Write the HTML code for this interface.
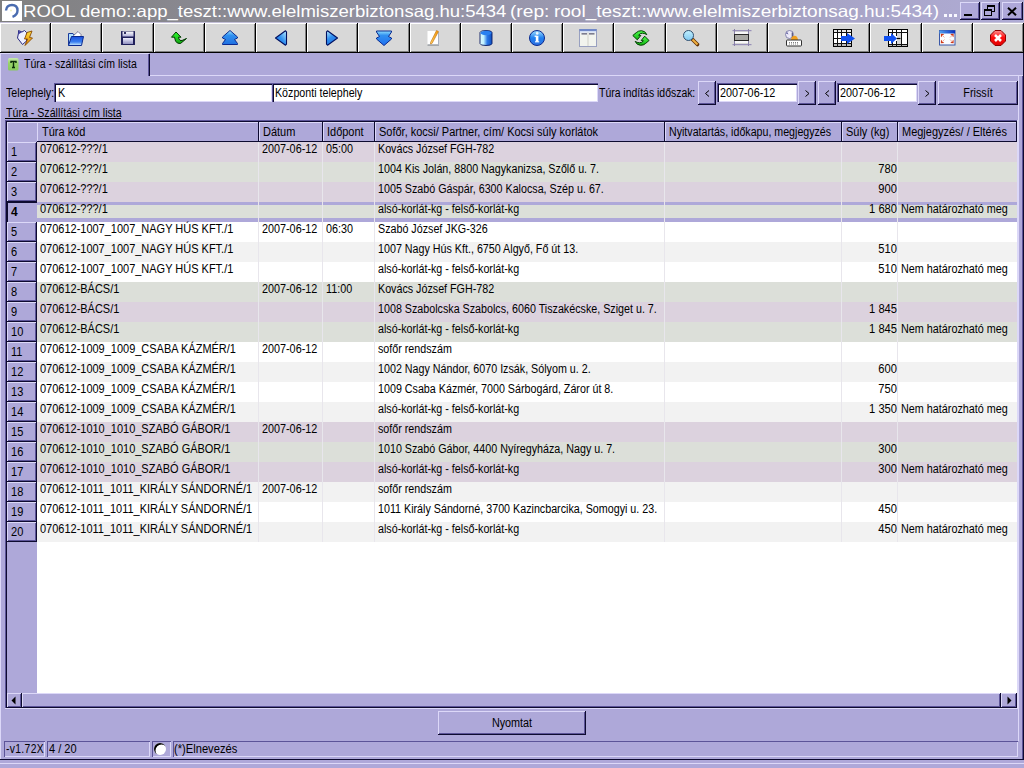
<!DOCTYPE html>
<html><head><meta charset="utf-8"><style>
html,body{margin:0;padding:0;width:1024px;height:768px;overflow:hidden;background:#aea8d9}
div,span,svg{position:absolute}
div{box-sizing:border-box}
.t{font-family:"Liberation Sans",sans-serif;font-size:12px;line-height:12px;white-space:pre;color:#000;transform-origin:0 0}
</style></head><body>
<div style="left:0px;top:0px;width:1024px;height:22px;background:linear-gradient(to right,#808080 0%,#b0acd6 100%)"></div><div style="left:2px;top:1px;width:20px;height:20px;background:#fff"><svg width="20" height="20" viewBox="0 0 20 20"><path d="M4 9.5 Q4.5 4 10 4 Q15.5 4 15.5 9.5 Q15.5 14 10.5 15.8" fill="none" stroke="#4a6cb0" stroke-width="2.4"/><circle cx="9" cy="9.5" r="1" fill="#f0f0c0"/></svg></div><span class="t" style="left:23px;top:3px;font-size:16.5px;line-height:16.5px;color:#fff;transform:scaleX(1.123)">ROOL demo::app_teszt::www.elelmiszerbiztonsag.hu:5434</span><span class="t" style="left:510px;top:3px;font-size:16.5px;line-height:16.5px;color:#fff;transform:scaleX(1.16)">(rep:</span><span class="t" style="left:554px;top:3px;font-size:16.5px;line-height:16.5px;color:#fff;transform:scaleX(1.15)">rool_teszt::www.elelmiszerbiztonsag.hu:5434)</span><div style="left:944px;top:14px;width:3px;height:3px;background:#f8f8ff"></div><div style="left:949px;top:14px;width:3px;height:3px;background:#f8f8ff"></div><div style="left:954px;top:14px;width:3px;height:3px;background:#f8f8ff"></div><div style="left:960px;top:2px;width:20px;height:18px;background:#aea8d9;box-shadow:inset -1px -1px 0 #0e0b30,inset 1px 1px 0 #dcd8f8,inset -2px -2px 0 #5c5498"><div style="left:4px;top:12px;width:8px;height:2px;background:#000"></div></div><div style="left:981px;top:2px;width:19px;height:18px;background:#aea8d9;box-shadow:inset -1px -1px 0 #0e0b30,inset 1px 1px 0 #dcd8f8,inset -2px -2px 0 #5c5498"><div style="left:6px;top:3px;width:8px;height:7px;border:1px solid #000;border-top-width:2px"></div><div style="left:3px;top:7px;width:8px;height:7px;border:1px solid #000;border-top-width:2px;background:#aea8d9"></div></div><div style="left:1002px;top:2px;width:21px;height:18px;background:#aea8d9;box-shadow:inset -1px -1px 0 #0e0b30,inset 1px 1px 0 #dcd8f8,inset -2px -2px 0 #5c5498"><svg style="left:5px;top:5px" width="10" height="9" viewBox="0 0 10 9"><path d="M1 0.8 L9 8.2 M9 0.8 L1 8.2" stroke="#000" stroke-width="2"/></svg></div><div style="left:0px;top:22px;width:1024px;height:1px;background:#c4c0d8"></div><div style="left:0px;top:23px;width:51px;height:30px;background:#d8d8d8;box-shadow:inset -1px -1px 0 #000000,inset 1px 1px 0 #ffffff,inset -2px -2px 0 #808080"><div style="left:17px;top:7px;width:16px;height:16px"><svg style="left:-4px;top:-3px;overflow:visible" width="26" height="22" viewBox="-4 -3 26 22"><defs><linearGradient id="g0" x1="0" y1="0" x2="0" y2="1"><stop offset="0" stop-color="#ffe040"/><stop offset="1" stop-color="#e08000"/></linearGradient></defs><path d="M1.5 0.5 L1.5 3 L0.5 8 L5.5 14.5 L9.5 11 L9.5 2.5 L7.5 0.5 L5 2 Z" fill="#eef0ff" stroke="#2a2a80" stroke-width="1"/><path d="M1.5 1 L1.5 4.5 L5 2 Z" fill="#4040a0"/><path d="M15 1 L10 2.5 L7.5 9 L10.5 9 L8 15.5 L15.5 8 L12.5 7.5 Z" fill="url(#g0)" stroke="#8a4a00" stroke-width="0.9" stroke-linejoin="round"/></svg></div></div><div style="left:51px;top:23px;width:51px;height:30px;background:#d8d8d8;box-shadow:inset -1px -1px 0 #000000,inset 1px 1px 0 #ffffff,inset -2px -2px 0 #808080"><div style="left:17px;top:7px;width:16px;height:16px"><svg style="left:-4px;top:-3px;overflow:visible" width="26" height="22" viewBox="-4 -3 26 22"><defs><linearGradient id="g1" x1="0" y1="0" x2="0" y2="1"><stop offset="0" stop-color="#1a50e0"/><stop offset="0.6" stop-color="#3a80f0"/><stop offset="1" stop-color="#d0f0ff"/></linearGradient></defs><path d="M0.5 15.5 V3.5 H5 L6 5 H11 V8" fill="#b0e0ff" stroke="#1a3a9a" stroke-width="1"/><path d="M4 7 L10 1.5 L13 4.5 L13 7 Z" fill="#ffffff" stroke="#505080" stroke-width="0.7"/><path d="M3.5 6.5 H15.5 L13.5 15.5 H0.5 Z" fill="url(#g1)" stroke="#0a2a90" stroke-width="1"/></svg></div></div><div style="left:102px;top:23px;width:52px;height:30px;background:#d8d8d8;box-shadow:inset -1px -1px 0 #000000,inset 1px 1px 0 #ffffff,inset -2px -2px 0 #808080"><div style="left:18px;top:7px;width:16px;height:16px"><svg style="left:-4px;top:-3px;overflow:visible" width="26" height="22" viewBox="-4 -3 26 22"><defs><linearGradient id="g2a" x1="0" y1="0" x2="0" y2="1"><stop offset="0" stop-color="#ffffff"/><stop offset="1" stop-color="#b0b0d8"/></linearGradient><linearGradient id="g2b" x1="0" y1="0" x2="0" y2="1"><stop offset="0" stop-color="#f0f0ff"/><stop offset="1" stop-color="#9090c0"/></linearGradient></defs><rect x="1" y="1" width="14" height="14" rx="0.5" fill="#20205a"/><rect x="2.5" y="1.5" width="11" height="5" fill="url(#g2a)"/><rect x="4" y="2" width="2" height="2" fill="#303060"/><rect x="3" y="8" width="10" height="6" fill="url(#g2b)"/></svg></div></div><div style="left:154px;top:23px;width:51px;height:30px;background:#d8d8d8;box-shadow:inset -1px -1px 0 #000000,inset 1px 1px 0 #ffffff,inset -2px -2px 0 #808080"><div style="left:17px;top:7px;width:16px;height:16px"><svg style="left:-4px;top:-3px;overflow:visible" width="26" height="22" viewBox="-4 -3 26 22"><defs><linearGradient id="g3" x1="0" y1="0" x2="0" y2="1"><stop offset="0" stop-color="#30ff30"/><stop offset="1" stop-color="#10a010"/></linearGradient></defs><path d="M5 2 L0.5 7.2 L3.5 7.2 L4.5 11 Q6 14 9.5 13.5 L15.5 8.5 L11 10.5 Q8.5 11 8 9 L7.5 7.2 L10 7.2 Z" fill="url(#g3)" stroke="#003a00" stroke-width="1" stroke-linejoin="round"/></svg></div></div><div style="left:205px;top:23px;width:51px;height:30px;background:#d8d8d8;box-shadow:inset -1px -1px 0 #000000,inset 1px 1px 0 #ffffff,inset -2px -2px 0 #808080"><div style="left:17px;top:7px;width:16px;height:16px"><svg style="left:-4px;top:-3px;overflow:visible" width="26" height="22" viewBox="-4 -3 26 22"><defs><linearGradient id="g4" x1="0" y1="0" x2="0" y2="1"><stop offset="0" stop-color="#a0e8ff"/><stop offset="0.35" stop-color="#3090f0"/><stop offset="1" stop-color="#2070e0"/></linearGradient></defs><path d="M8 0.5 L15.5 7 L15.5 8 L12.5 9.5 L15.5 13.5 L15.5 14.5 L0.5 14.5 L0.5 13.5 L3.5 9.5 L0.5 8 L0.5 7 Z" fill="url(#g4)" stroke="#0a2a90" stroke-width="1" stroke-linejoin="round"/></svg></div></div><div style="left:256px;top:23px;width:51px;height:30px;background:#d8d8d8;box-shadow:inset -1px -1px 0 #000000,inset 1px 1px 0 #ffffff,inset -2px -2px 0 #808080"><div style="left:17px;top:7px;width:16px;height:16px"><svg style="left:-4px;top:-3px;overflow:visible" width="26" height="22" viewBox="-4 -3 26 22"><defs><linearGradient id="g5" x1="1" y1="0" x2="0" y2="1"><stop offset="0" stop-color="#c0f0ff"/><stop offset="0.5" stop-color="#3090f0"/><stop offset="1" stop-color="#2070e0"/></linearGradient></defs><path d="M2.5 8 L12.5 0.8 L13.5 1.8 L13.5 14.2 L12.5 15.2 Z" fill="url(#g5)" stroke="#001060" stroke-width="1.1" stroke-linejoin="round"/></svg></div></div><div style="left:307px;top:23px;width:51px;height:30px;background:#d8d8d8;box-shadow:inset -1px -1px 0 #000000,inset 1px 1px 0 #ffffff,inset -2px -2px 0 #808080"><div style="left:17px;top:7px;width:16px;height:16px"><svg style="left:-4px;top:-3px;overflow:visible" width="26" height="22" viewBox="-4 -3 26 22"><defs><linearGradient id="g6" x1="0" y1="0" x2="0.6" y2="1"><stop offset="0" stop-color="#c0f0ff"/><stop offset="0.5" stop-color="#3090f0"/><stop offset="1" stop-color="#2070e0"/></linearGradient></defs><path d="M13.5 8 L3.5 0.8 L2.5 1.8 L2.5 14.2 L3.5 15.2 Z" fill="url(#g6)" stroke="#001060" stroke-width="1.1" stroke-linejoin="round"/></svg></div></div><div style="left:358px;top:23px;width:52px;height:30px;background:#d8d8d8;box-shadow:inset -1px -1px 0 #000000,inset 1px 1px 0 #ffffff,inset -2px -2px 0 #808080"><div style="left:18px;top:7px;width:16px;height:16px"><svg style="left:-4px;top:-3px;overflow:visible" width="26" height="22" viewBox="-4 -3 26 22"><defs><linearGradient id="g7" x1="0" y1="0" x2="0" y2="1"><stop offset="0" stop-color="#90e0ff"/><stop offset="0.3" stop-color="#3090f0"/><stop offset="1" stop-color="#2070f0"/></linearGradient></defs><path d="M0.5 1 L15.5 1 L15.5 2 L12.5 6.5 L15.5 8 L15.5 9 L8 15.5 L0.5 9 L0.5 8 L3.5 6.5 L0.5 2 Z" fill="url(#g7)" stroke="#0a2a90" stroke-width="1" stroke-linejoin="round"/></svg></div></div><div style="left:410px;top:23px;width:51px;height:30px;background:#d8d8d8;box-shadow:inset -1px -1px 0 #000000,inset 1px 1px 0 #ffffff,inset -2px -2px 0 #808080"><div style="left:17px;top:7px;width:16px;height:16px"><svg style="left:-4px;top:-3px;overflow:visible" width="26" height="22" viewBox="-4 -3 26 22"><defs><linearGradient id="g8" x1="0" y1="0" x2="1" y2="0"><stop offset="0" stop-color="#ffd060"/><stop offset="1" stop-color="#f09000"/></linearGradient></defs><rect x="0.5" y="1" width="11" height="14" fill="#ffffff"/><rect x="0.5" y="14.5" width="11.5" height="1" fill="#707880"/><rect x="11" y="2" width="1" height="13" fill="#a8b0c0"/><path d="M9.5 0.5 L11.5 1.5 L5 13.5 L3.5 14 L3.5 12.5 Z" fill="url(#g8)" stroke="#c07010" stroke-width="0.6"/></svg></div></div><div style="left:461px;top:23px;width:51px;height:30px;background:#d8d8d8;box-shadow:inset -1px -1px 0 #000000,inset 1px 1px 0 #ffffff,inset -2px -2px 0 #808080"><div style="left:17px;top:7px;width:16px;height:16px"><svg style="left:-4px;top:-3px;overflow:visible" width="26" height="22" viewBox="-4 -3 26 22"><defs><linearGradient id="g9" x1="0" y1="0" x2="1" y2="0"><stop offset="0" stop-color="#e0fcff"/><stop offset="0.3" stop-color="#c0f0ff"/><stop offset="0.6" stop-color="#2a78e8"/><stop offset="1" stop-color="#1050c0"/></linearGradient></defs><path d="M2 2.5 Q2 0.5 8 0.5 Q14 0.5 14 2.5 V13.5 Q14 15.5 8 15.5 Q2 15.5 2 13.5 Z" fill="url(#g9)" stroke="#0a1a60" stroke-width="0.9"/><ellipse cx="8" cy="3" rx="5.5" ry="2.2" fill="#2a80f0"/></svg></div></div><div style="left:512px;top:23px;width:51px;height:30px;background:#d8d8d8;box-shadow:inset -1px -1px 0 #000000,inset 1px 1px 0 #ffffff,inset -2px -2px 0 #808080"><div style="left:17px;top:7px;width:16px;height:16px"><svg style="left:-4px;top:-3px;overflow:visible" width="26" height="22" viewBox="-4 -3 26 22"><defs><linearGradient id="g10" x1="0" y1="0" x2="0" y2="1"><stop offset="0" stop-color="#a0e0ff"/><stop offset="0.5" stop-color="#2080f0"/><stop offset="1" stop-color="#3070e0"/></linearGradient></defs><circle cx="8" cy="8" r="7.5" fill="url(#g10)" stroke="#0a2a90" stroke-width="1"/><rect x="6.8" y="5.8" width="2.6" height="6.2" fill="#ffffff"/><rect x="5.6" y="5.6" width="2" height="1.3" fill="#ffffff"/><rect x="6" y="11.2" width="4.2" height="1.2" fill="#e8f4ff"/><circle cx="8.2" cy="3.4" r="1.3" fill="#f0f8ff"/></svg></div></div><div style="left:563px;top:23px;width:51px;height:30px;background:#d8d8d8;box-shadow:inset -1px -1px 0 #000000,inset 1px 1px 0 #ffffff,inset -2px -2px 0 #808080"><div style="left:17px;top:7px;width:16px;height:16px"><svg style="left:-4px;top:-3px;overflow:visible" width="26" height="22" viewBox="-4 -3 26 22"><defs></defs><rect x="-0.5" y="-0.5" width="17" height="17" fill="#f2f4ee" stroke="#98a0c0" stroke-width="1"/><rect x="-0.5" y="-1" width="17" height="2.2" fill="#7088c8"/><rect x="0" y="1.2" width="16" height="1.3" fill="#d0dcf8"/><rect x="1.5" y="3.2" width="5.5" height="1.3" fill="#606078"/><rect x="9" y="3.2" width="5.5" height="1.3" fill="#606078"/><rect x="7.5" y="2.5" width="1" height="13.5" fill="#d0d0c8"/></svg></div></div><div style="left:614px;top:23px;width:52px;height:30px;background:#d8d8d8;box-shadow:inset -1px -1px 0 #000000,inset 1px 1px 0 #ffffff,inset -2px -2px 0 #808080"><div style="left:18px;top:7px;width:16px;height:16px"><svg style="left:-4px;top:-3px;overflow:visible" width="26" height="22" viewBox="-4 -3 26 22"><defs><linearGradient id="g12" x1="0" y1="0" x2="0" y2="1"><stop offset="0" stop-color="#50ff50"/><stop offset="1" stop-color="#10b010"/></linearGradient></defs><path d="M0.8 5.5 L5.3 9.8 L8.8 5.5 L6.6 5.2 Q8 3.2 10.5 3.2 Q13 3.4 14.8 4.6 Q13.2 0.9 9.5 0.7 Q6.2 0.7 4.3 2.6 Z" fill="url(#g12)" stroke="#004000" stroke-width="1" stroke-linejoin="round"/><path d="M17 10.5 L12.7 6.2 L9.2 10.5 L11.4 10.8 Q10 12.8 7.5 12.8 Q5 12.6 3.2 11.4 Q4.8 15.1 8.5 15.3 Q11.8 15.3 13.7 13.4 Z" fill="url(#g12)" stroke="#004000" stroke-width="1" stroke-linejoin="round"/></svg></div></div><div style="left:666px;top:23px;width:51px;height:30px;background:#d8d8d8;box-shadow:inset -1px -1px 0 #000000,inset 1px 1px 0 #ffffff,inset -2px -2px 0 #808080"><div style="left:17px;top:7px;width:16px;height:16px"><svg style="left:-4px;top:-3px;overflow:visible" width="26" height="22" viewBox="-4 -3 26 22"><defs><linearGradient id="g13" x1="0" y1="0" x2="0" y2="1"><stop offset="0" stop-color="#c0f0ff"/><stop offset="1" stop-color="#80c8f0"/></linearGradient></defs><path d="M9.5 9.5 L14.5 14.5" stroke="#603000" stroke-width="3.6" stroke-linecap="round"/><path d="M9.5 9.5 L14.5 14.5" stroke="#f0b040" stroke-width="2"/><circle cx="5.5" cy="5.5" r="5" fill="url(#g13)" stroke="#305070" stroke-width="1"/></svg></div></div><div style="left:717px;top:23px;width:51px;height:30px;background:#d8d8d8;box-shadow:inset -1px -1px 0 #000000,inset 1px 1px 0 #ffffff,inset -2px -2px 0 #808080"><div style="left:17px;top:7px;width:16px;height:16px"><svg style="left:-4px;top:-3px;overflow:visible" width="26" height="22" viewBox="-4 -3 26 22"><defs></defs><rect x="-1.5" y="0" width="19" height="1.2" fill="#9890b8"/><rect x="-1.5" y="14" width="19" height="1.2" fill="#9890b8"/><rect x="0" y="-1" width="1" height="17" fill="#8880a8"/><rect x="14" y="-1" width="1" height="17" fill="#8880a8"/><rect x="1" y="2" width="13" height="2" fill="#f8f8f8"/><rect x="1" y="11" width="13" height="2" fill="#f8f8f8"/><rect x="0.5" y="4.5" width="14" height="6" fill="#a8a8a4" stroke="#282828" stroke-width="1"/></svg></div></div><div style="left:768px;top:23px;width:51px;height:30px;background:#d8d8d8;box-shadow:inset -1px -1px 0 #000000,inset 1px 1px 0 #ffffff,inset -2px -2px 0 #808080"><div style="left:17px;top:7px;width:16px;height:16px"><svg style="left:-4px;top:-3px;overflow:visible" width="26" height="22" viewBox="-4 -3 26 22"><defs></defs><circle cx="4.5" cy="4.5" r="4" fill="#eceaf8" stroke="#7070a0" stroke-width="0.8"/><path d="M1 3.5 L3.5 4.5 L2 1.8" fill="#6060a0"/><rect x="6.7" y="2.5" width="1.2" height="5.5" fill="#505078"/><path d="M6 10 Q6.5 5.8 9.5 5.8 Q12.5 5.8 13 10 Z" fill="#f0a020"/><rect x="1.5" y="10" width="15" height="6" rx="0.8" fill="#ffffff" stroke="#303030" stroke-width="1"/><path d="M4 12.5 H13.5 M4 14 H13.5" stroke="#707070" stroke-width="0.9" stroke-dasharray="1 1"/></svg></div></div><div style="left:819px;top:23px;width:51px;height:30px;background:#d8d8d8;box-shadow:inset -1px -1px 0 #000000,inset 1px 1px 0 #ffffff,inset -2px -2px 0 #808080"><div style="left:17px;top:7px;width:16px;height:16px"><svg style="left:-4px;top:-3px;overflow:visible" width="26" height="22" viewBox="-4 -3 26 22"><defs></defs><rect x="-2.5" y="-0.5" width="18" height="17" fill="#ffffff" stroke="#000" stroke-width="1"/><rect x="-2" y="0" width="17" height="2" fill="#e8e8e8"/><rect x="-2" y="14" width="17" height="2" fill="#b8b8b8"/><path d="M-2.5 2.5 H15.5 M-2.5 8.5 H15.5 M-2.5 13.5 H15.5 M1.5 -0.5 V16.5 M5.5 -0.5 V16.5 M10.5 -0.5 V16.5" stroke="#101010" stroke-width="1" shape-rendering="crispEdges"/><path d="M5 6 H11 V3 L19 8.5 L11 14 V11 H5 Z" fill="#1050f0"/></svg></div></div><div style="left:870px;top:23px;width:52px;height:30px;background:#d8d8d8;box-shadow:inset -1px -1px 0 #000000,inset 1px 1px 0 #ffffff,inset -2px -2px 0 #808080"><div style="left:18px;top:7px;width:16px;height:16px"><svg style="left:-4px;top:-3px;overflow:visible" width="26" height="22" viewBox="-4 -3 26 22"><defs></defs><rect x="0.5" y="-0.5" width="19" height="17" fill="#ffffff" stroke="#000" stroke-width="1"/><rect x="9" y="3" width="5" height="11" fill="#d8d8d8"/><rect x="1" y="14" width="18" height="2" fill="#b8b8b8"/><path d="M0.5 2.5 H19.5 M0.5 14.5 H19.5 M4.5 -0.5 V16.5 M8.5 -0.5 V6 M8.5 11 V16.5 M13.5 -0.5 V16.5" stroke="#101010" stroke-width="1" shape-rendering="crispEdges"/><path d="M8.5 8.5 H12.5" stroke="#000" stroke-width="1.2"/><path d="M-4 6 H3 V3 L9 8.5 L3 14 V11 H-4 Z" fill="#1050f0"/></svg></div></div><div style="left:922px;top:23px;width:51px;height:30px;background:#d8d8d8;box-shadow:inset -1px -1px 0 #000000,inset 1px 1px 0 #ffffff,inset -2px -2px 0 #808080"><div style="left:17px;top:7px;width:16px;height:16px"><svg style="left:-4px;top:-3px;overflow:visible" width="26" height="22" viewBox="-4 -3 26 22"><defs><linearGradient id="g18" x1="0" y1="0" x2="1" y2="0"><stop offset="0" stop-color="#50a0f0"/><stop offset="1" stop-color="#0a30c0"/></linearGradient></defs><rect x="0.5" y="0.5" width="15.5" height="14.5" fill="#fafcff" stroke="#3a58a8" stroke-width="1"/><rect x="0.5" y="0.5" width="15.5" height="3" fill="url(#g18)"/><path d="M1.8 3.8 L5.2 4 L2 7.2 Z M14.7 3.8 L11.3 4 L14.5 7.2 Z M1.8 13.2 L5.2 13 L2 9.8 Z M14.7 13.2 L11.3 13 L14.5 9.8 Z" fill="#d03818"/><path d="M3 5 L5.5 7.5 M13.5 5 L11 7.5 M3 12 L5.5 9.5 M13.5 12 L11 9.5" stroke="#f0b0a0" stroke-width="1"/></svg></div></div><div style="left:973px;top:23px;width:51px;height:30px;background:#d8d8d8;box-shadow:inset -1px -1px 0 #000000,inset 1px 1px 0 #ffffff,inset -2px -2px 0 #808080"><div style="left:17px;top:7px;width:16px;height:16px"><svg style="left:-4px;top:-3px;overflow:visible" width="26" height="22" viewBox="-4 -3 26 22"><defs><linearGradient id="g19" x1="0" y1="0" x2="0" y2="1"><stop offset="0" stop-color="#ff9090"/><stop offset="0.45" stop-color="#ff1010"/><stop offset="1" stop-color="#e00000"/></linearGradient></defs><path d="M5 0.5 H11 L15.5 5 V11 L11 15.5 H5 L0.5 11 V5 Z" fill="url(#g19)" stroke="#900000" stroke-width="1"/><path d="M5 5 L11 11 M11 5 L5 11" stroke="#ffffff" stroke-width="2.6"/></svg></div></div><div style="left:0px;top:53px;width:1px;height:706px;background:#dcd8f8"></div><div style="left:1px;top:53px;width:148px;height:1px;background:#dcd8f8"></div><div style="left:149px;top:54px;width:1px;height:22px;background:#0e0b30"></div><div style="left:148px;top:54px;width:1px;height:22px;background:#5c5498"></div><div style="left:1022px;top:76px;width:1px;height:683px;background:#5c5498"></div><div style="left:1018px;top:76px;width:1px;height:665px;background:#dcd8f8"></div><div style="left:150px;top:75px;width:873px;height:1px;background:#dcd8f8"></div><div style="left:1023px;top:53px;width:1px;height:707px;background:#0e0b30"></div><div style="left:8px;top:59px;width:11px;height:12px;"><svg style="left:0;top:-1px" width="11" height="13" viewBox="0 0 11 13"><defs><linearGradient id="gt" x1="0" y1="0" x2="0" y2="1"><stop offset="0" stop-color="#c8e8b0"/><stop offset="0.4" stop-color="#98d468"/><stop offset="1" stop-color="#88c860"/></linearGradient></defs><rect x="0" y="0" width="10.5" height="12.5" rx="1.5" fill="url(#gt)"/><path d="M3 5 V3.5 H8 V5 M5.5 3.5 V9.3 M4 9.5 H7" fill="none" stroke="#0a2a0a" stroke-width="1.4"/></svg></div><span class="t" style="left:24px;top:58px;transform:scaleX(0.876);">Túra - szállítási cím lista</span><span class="t" style="left:6px;top:87px;transform:scaleX(0.89);">Telephely</span><span class="t" style="left:51px;top:87px;transform:scaleX(1);">:</span><div style="left:54px;top:83px;width:218px;height:19px;background:#fff;box-shadow:inset 1px 1px 0 #5c5498,inset 2px 2px 0 #0e0b30,inset -1px -1px 0 #dcd8f8"></div><span class="t" style="left:58px;top:87px;transform:scaleX(0.9);">K</span><div style="left:272px;top:83px;width:326px;height:19px;background:#fff;box-shadow:inset 1px 1px 0 #5c5498,inset 2px 2px 0 #0e0b30,inset -1px -1px 0 #dcd8f8"></div><span class="t" style="left:275px;top:87px;transform:scaleX(0.89);">Központi telephely</span><span class="t" style="left:599px;top:87px;transform:scaleX(0.87);">Túra indítás időszak</span><span class="t" style="left:692px;top:87px;transform:scaleX(1);">:</span><div style="left:698px;top:81px;width:18px;height:24px;background:#aea8d9;box-shadow:inset -1px -1px 0 #0e0b30,inset 1px 1px 0 #dcd8f8,inset -2px -2px 0 #5c5498"><svg style="left:7px;top:9px" width="5" height="7"><path d="M4 0.5 L0.5 3.5 L4 6.5" fill="none" stroke="#000" stroke-width="1"/></svg></div><div style="left:717px;top:83px;width:80px;height:19px;background:#fff;box-shadow:inset 1px 1px 0 #5c5498,inset 2px 2px 0 #0e0b30,inset -1px -1px 0 #dcd8f8"></div><span class="t" style="left:720px;top:87px;transform:scaleX(0.9);">2007-06-12</span><div style="left:798px;top:81px;width:18px;height:24px;background:#aea8d9;box-shadow:inset -1px -1px 0 #0e0b30,inset 1px 1px 0 #dcd8f8,inset -2px -2px 0 #5c5498"><svg style="left:7px;top:9px" width="5" height="7"><path d="M0.5 0.5 L4 3.5 L0.5 6.5" fill="none" stroke="#000" stroke-width="1"/></svg></div><div style="left:818px;top:81px;width:18px;height:24px;background:#aea8d9;box-shadow:inset -1px -1px 0 #0e0b30,inset 1px 1px 0 #dcd8f8,inset -2px -2px 0 #5c5498"><svg style="left:7px;top:9px" width="5" height="7"><path d="M4 0.5 L0.5 3.5 L4 6.5" fill="none" stroke="#000" stroke-width="1"/></svg></div><div style="left:837px;top:83px;width:80px;height:19px;background:#fff;box-shadow:inset 1px 1px 0 #5c5498,inset 2px 2px 0 #0e0b30,inset -1px -1px 0 #dcd8f8"></div><span class="t" style="left:840px;top:87px;transform:scaleX(0.9);">2007-06-12</span><div style="left:918px;top:81px;width:18px;height:24px;background:#aea8d9;box-shadow:inset -1px -1px 0 #0e0b30,inset 1px 1px 0 #dcd8f8,inset -2px -2px 0 #5c5498"><svg style="left:7px;top:9px" width="5" height="7"><path d="M0.5 0.5 L4 3.5 L0.5 6.5" fill="none" stroke="#000" stroke-width="1"/></svg></div><div style="left:938px;top:81px;width:80px;height:24px;background:#aea8d9;box-shadow:inset -1px -1px 0 #0e0b30,inset 1px 1px 0 #dcd8f8,inset -2px -2px 0 #5c5498"></div><span class="t" style="left:828px;width:300px;text-align:center;top:87px;transform:scaleX(0.9);transform-origin:50% 0;">Frissít</span><span class="t" style="left:6px;top:107px;transform:scaleX(0.885);">Túra - Szállítási cím lista</span><div style="left:5px;top:118px;width:116px;height:1px;background:#000"></div><div style="left:5px;top:120px;width:1013px;height:1px;background:#5c5498"></div><div style="left:5px;top:120px;width:1px;height:589px;background:#5c5498"></div><div style="left:6px;top:121px;width:1011px;height:1px;background:#0e0b30"></div><div style="left:6px;top:121px;width:1px;height:587px;background:#0e0b30"></div><div style="left:5px;top:708px;width:1013px;height:1px;background:#dcd8f8"></div><div style="left:1017px;top:120px;width:1px;height:589px;background:#dcd8f8"></div><div style="left:7px;top:122px;width:30px;height:571px;background:#aea8d9"></div><div style="left:37px;top:142px;width:980px;height:551px;background:#fff"></div><div style="left:7px;top:122px;width:30px;height:1px;background:#dcd8f8"></div><div style="left:7px;top:122px;width:1px;height:20px;background:#dcd8f8"></div><div style="left:37px;top:122px;width:222px;height:20px;background:#aea8d9;box-shadow:inset -1px -1px 0 #0e0b30,inset 1px 1px 0 #dcd8f8"></div><span class="t" style="left:42px;top:126px;transform:scaleX(0.915);">Túra kód</span><div style="left:259px;top:122px;width:64px;height:20px;background:#aea8d9;box-shadow:inset -1px -1px 0 #0e0b30,inset 1px 1px 0 #dcd8f8"></div><span class="t" style="left:263px;top:126px;transform:scaleX(0.915);">Dátum</span><div style="left:323px;top:122px;width:52px;height:20px;background:#aea8d9;box-shadow:inset -1px -1px 0 #0e0b30,inset 1px 1px 0 #dcd8f8"></div><span class="t" style="left:327px;top:126px;transform:scaleX(0.915);">Időpont</span><div style="left:375px;top:122px;width:290px;height:20px;background:#aea8d9;box-shadow:inset -1px -1px 0 #0e0b30,inset 1px 1px 0 #dcd8f8"></div><span class="t" style="left:379px;top:126px;transform:scaleX(0.915);">Sofőr, kocsi/ Partner, cím/ Kocsi súly korlátok</span><div style="left:665px;top:122px;width:177px;height:20px;background:#aea8d9;box-shadow:inset -1px -1px 0 #0e0b30,inset 1px 1px 0 #dcd8f8"></div><span class="t" style="left:669px;top:126px;transform:scaleX(0.887);">Nyitvatartás, időkapu, megjegyzés</span><div style="left:842px;top:122px;width:56px;height:20px;background:#aea8d9;box-shadow:inset -1px -1px 0 #0e0b30,inset 1px 1px 0 #dcd8f8"></div><span class="t" style="left:846px;top:126px;transform:scaleX(0.915);">Súly (kg)</span><div style="left:898px;top:122px;width:119px;height:20px;background:#aea8d9;box-shadow:inset -1px -1px 0 #0e0b30,inset 1px 1px 0 #dcd8f8"></div><span class="t" style="left:902px;top:126px;transform:scaleX(0.915);">Megjegyzés/ / Eltérés</span><div style="left:37px;top:142px;width:980px;height:20px;background:#dcd2de"></div><div style="left:258px;top:142px;width:1px;height:20px;background:#e8e6ec"></div><div style="left:322px;top:142px;width:1px;height:20px;background:#e8e6ec"></div><div style="left:374px;top:142px;width:1px;height:20px;background:#e8e6ec"></div><div style="left:664px;top:142px;width:1px;height:20px;background:#e8e6ec"></div><div style="left:841px;top:142px;width:1px;height:20px;background:#e8e6ec"></div><div style="left:897px;top:142px;width:1px;height:20px;background:#e8e6ec"></div><div style="left:7px;top:142px;width:30px;height:20px;background:#aea8d9;box-shadow:inset -1px -1px 0 #0e0b30,inset 1px 1px 0 #dcd8f8,inset -2px -2px 0 #5c5498"></div><span class="t" style="left:11px;top:146px;transform:scaleX(0.92);">1</span><span class="t" style="left:40px;top:143px;transform:scaleX(0.915);">070612-???/1</span><span class="t" style="left:262px;top:143px;transform:scaleX(0.9);">2007-06-12</span><span class="t" style="left:326px;top:143px;transform:scaleX(0.9);">05:00</span><span class="t" style="left:378px;top:143px;transform:scaleX(0.893);">Kovács József FGH-782</span><div style="left:37px;top:162px;width:980px;height:20px;background:#dcdfd9"></div><div style="left:258px;top:162px;width:1px;height:20px;background:#e8e6ec"></div><div style="left:322px;top:162px;width:1px;height:20px;background:#e8e6ec"></div><div style="left:374px;top:162px;width:1px;height:20px;background:#e8e6ec"></div><div style="left:664px;top:162px;width:1px;height:20px;background:#e8e6ec"></div><div style="left:841px;top:162px;width:1px;height:20px;background:#e8e6ec"></div><div style="left:897px;top:162px;width:1px;height:20px;background:#e8e6ec"></div><div style="left:7px;top:162px;width:30px;height:20px;background:#aea8d9;box-shadow:inset -1px -1px 0 #0e0b30,inset 1px 1px 0 #dcd8f8,inset -2px -2px 0 #5c5498"></div><span class="t" style="left:11px;top:166px;transform:scaleX(0.92);">2</span><span class="t" style="left:40px;top:163px;transform:scaleX(0.915);">070612-???/1</span><span class="t" style="left:378px;top:163px;transform:scaleX(0.893);">1004 Kis Jolán, 8800 Nagykanizsa, Szőlő u. 7.</span><span class="t" style="left:597px;width:300px;text-align:right;top:163px;transform:scaleX(0.93);transform-origin:100% 0;">780</span><div style="left:37px;top:182px;width:980px;height:20px;background:#dcd2de"></div><div style="left:258px;top:182px;width:1px;height:20px;background:#e8e6ec"></div><div style="left:322px;top:182px;width:1px;height:20px;background:#e8e6ec"></div><div style="left:374px;top:182px;width:1px;height:20px;background:#e8e6ec"></div><div style="left:664px;top:182px;width:1px;height:20px;background:#e8e6ec"></div><div style="left:841px;top:182px;width:1px;height:20px;background:#e8e6ec"></div><div style="left:897px;top:182px;width:1px;height:20px;background:#e8e6ec"></div><div style="left:7px;top:182px;width:30px;height:20px;background:#aea8d9;box-shadow:inset -1px -1px 0 #0e0b30,inset 1px 1px 0 #dcd8f8,inset -2px -2px 0 #5c5498"></div><span class="t" style="left:11px;top:186px;transform:scaleX(0.92);">3</span><span class="t" style="left:40px;top:183px;transform:scaleX(0.915);">070612-???/1</span><span class="t" style="left:378px;top:183px;transform:scaleX(0.893);">1005 Szabó Gáspár, 6300 Kalocsa, Szép u. 67.</span><span class="t" style="left:597px;width:300px;text-align:right;top:183px;transform:scaleX(0.93);transform-origin:100% 0;">900</span><div style="left:37px;top:202px;width:980px;height:20px;background:#dcdfd9"></div><div style="left:37px;top:202px;width:980px;height:3px;background:#aea8d9"></div><div style="left:37px;top:218px;width:980px;height:4px;background:#aea8d9"></div><div style="left:258px;top:202px;width:1px;height:20px;background:#e8e6ec"></div><div style="left:322px;top:202px;width:1px;height:20px;background:#e8e6ec"></div><div style="left:374px;top:202px;width:1px;height:20px;background:#e8e6ec"></div><div style="left:664px;top:202px;width:1px;height:20px;background:#e8e6ec"></div><div style="left:841px;top:202px;width:1px;height:20px;background:#e8e6ec"></div><div style="left:897px;top:202px;width:1px;height:20px;background:#e8e6ec"></div><div style="left:7px;top:202px;width:30px;height:20px;background:#aea8d9;box-shadow:inset 1px 1px 0 #0e0b30"></div><span class="t" style="left:11px;top:206px;transform:scaleX(1);font-weight:bold">4</span><span class="t" style="left:40px;top:203px;transform:scaleX(0.915);">070612-???/1</span><span class="t" style="left:378px;top:203px;transform:scaleX(0.893);">alsó-korlát-kg - felső-korlát-kg</span><span class="t" style="left:597px;width:300px;text-align:right;top:203px;transform:scaleX(0.93);transform-origin:100% 0;">1 680</span><span class="t" style="left:901px;top:203px;transform:scaleX(0.9);">Nem határozható meg</span><div style="left:37px;top:222px;width:980px;height:20px;background:#ffffff"></div><div style="left:258px;top:222px;width:1px;height:20px;background:#e8e6ec"></div><div style="left:322px;top:222px;width:1px;height:20px;background:#e8e6ec"></div><div style="left:374px;top:222px;width:1px;height:20px;background:#e8e6ec"></div><div style="left:664px;top:222px;width:1px;height:20px;background:#e8e6ec"></div><div style="left:841px;top:222px;width:1px;height:20px;background:#e8e6ec"></div><div style="left:897px;top:222px;width:1px;height:20px;background:#e8e6ec"></div><div style="left:7px;top:222px;width:30px;height:20px;background:#aea8d9;box-shadow:inset -1px -1px 0 #0e0b30,inset 1px 1px 0 #dcd8f8,inset -2px -2px 0 #5c5498"></div><span class="t" style="left:11px;top:226px;transform:scaleX(0.92);">5</span><span class="t" style="left:40px;top:223px;transform:scaleX(0.915);">070612-1007_1007_NAGY HÚS KFT./1</span><span class="t" style="left:262px;top:223px;transform:scaleX(0.9);">2007-06-12</span><span class="t" style="left:326px;top:223px;transform:scaleX(0.9);">06:30</span><span class="t" style="left:378px;top:223px;transform:scaleX(0.893);">Szabó József JKG-326</span><div style="left:37px;top:242px;width:980px;height:20px;background:#f2f2f2"></div><div style="left:258px;top:242px;width:1px;height:20px;background:#e8e6ec"></div><div style="left:322px;top:242px;width:1px;height:20px;background:#e8e6ec"></div><div style="left:374px;top:242px;width:1px;height:20px;background:#e8e6ec"></div><div style="left:664px;top:242px;width:1px;height:20px;background:#e8e6ec"></div><div style="left:841px;top:242px;width:1px;height:20px;background:#e8e6ec"></div><div style="left:897px;top:242px;width:1px;height:20px;background:#e8e6ec"></div><div style="left:7px;top:242px;width:30px;height:20px;background:#aea8d9;box-shadow:inset -1px -1px 0 #0e0b30,inset 1px 1px 0 #dcd8f8,inset -2px -2px 0 #5c5498"></div><span class="t" style="left:11px;top:246px;transform:scaleX(0.92);">6</span><span class="t" style="left:40px;top:243px;transform:scaleX(0.915);">070612-1007_1007_NAGY HÚS KFT./1</span><span class="t" style="left:378px;top:243px;transform:scaleX(0.893);">1007 Nagy Hús Kft., 6750 Algyő, Fő út 13.</span><span class="t" style="left:597px;width:300px;text-align:right;top:243px;transform:scaleX(0.93);transform-origin:100% 0;">510</span><div style="left:37px;top:262px;width:980px;height:20px;background:#ffffff"></div><div style="left:258px;top:262px;width:1px;height:20px;background:#e8e6ec"></div><div style="left:322px;top:262px;width:1px;height:20px;background:#e8e6ec"></div><div style="left:374px;top:262px;width:1px;height:20px;background:#e8e6ec"></div><div style="left:664px;top:262px;width:1px;height:20px;background:#e8e6ec"></div><div style="left:841px;top:262px;width:1px;height:20px;background:#e8e6ec"></div><div style="left:897px;top:262px;width:1px;height:20px;background:#e8e6ec"></div><div style="left:7px;top:262px;width:30px;height:20px;background:#aea8d9;box-shadow:inset -1px -1px 0 #0e0b30,inset 1px 1px 0 #dcd8f8,inset -2px -2px 0 #5c5498"></div><span class="t" style="left:11px;top:266px;transform:scaleX(0.92);">7</span><span class="t" style="left:40px;top:263px;transform:scaleX(0.915);">070612-1007_1007_NAGY HÚS KFT./1</span><span class="t" style="left:378px;top:263px;transform:scaleX(0.893);">alsó-korlát-kg - felső-korlát-kg</span><span class="t" style="left:597px;width:300px;text-align:right;top:263px;transform:scaleX(0.93);transform-origin:100% 0;">510</span><span class="t" style="left:901px;top:263px;transform:scaleX(0.9);">Nem határozható meg</span><div style="left:37px;top:282px;width:980px;height:20px;background:#dcdfd9"></div><div style="left:258px;top:282px;width:1px;height:20px;background:#e8e6ec"></div><div style="left:322px;top:282px;width:1px;height:20px;background:#e8e6ec"></div><div style="left:374px;top:282px;width:1px;height:20px;background:#e8e6ec"></div><div style="left:664px;top:282px;width:1px;height:20px;background:#e8e6ec"></div><div style="left:841px;top:282px;width:1px;height:20px;background:#e8e6ec"></div><div style="left:897px;top:282px;width:1px;height:20px;background:#e8e6ec"></div><div style="left:7px;top:282px;width:30px;height:20px;background:#aea8d9;box-shadow:inset -1px -1px 0 #0e0b30,inset 1px 1px 0 #dcd8f8,inset -2px -2px 0 #5c5498"></div><span class="t" style="left:11px;top:286px;transform:scaleX(0.92);">8</span><span class="t" style="left:40px;top:283px;transform:scaleX(0.915);">070612-BÁCS/1</span><span class="t" style="left:262px;top:283px;transform:scaleX(0.9);">2007-06-12</span><span class="t" style="left:326px;top:283px;transform:scaleX(0.9);">11:00</span><span class="t" style="left:378px;top:283px;transform:scaleX(0.893);">Kovács József FGH-782</span><div style="left:37px;top:302px;width:980px;height:20px;background:#dcd2de"></div><div style="left:258px;top:302px;width:1px;height:20px;background:#e8e6ec"></div><div style="left:322px;top:302px;width:1px;height:20px;background:#e8e6ec"></div><div style="left:374px;top:302px;width:1px;height:20px;background:#e8e6ec"></div><div style="left:664px;top:302px;width:1px;height:20px;background:#e8e6ec"></div><div style="left:841px;top:302px;width:1px;height:20px;background:#e8e6ec"></div><div style="left:897px;top:302px;width:1px;height:20px;background:#e8e6ec"></div><div style="left:7px;top:302px;width:30px;height:20px;background:#aea8d9;box-shadow:inset -1px -1px 0 #0e0b30,inset 1px 1px 0 #dcd8f8,inset -2px -2px 0 #5c5498"></div><span class="t" style="left:11px;top:306px;transform:scaleX(0.92);">9</span><span class="t" style="left:40px;top:303px;transform:scaleX(0.915);">070612-BÁCS/1</span><span class="t" style="left:378px;top:303px;transform:scaleX(0.893);">1008 Szabolcska Szabolcs, 6060 Tiszakécske, Sziget u. 7.</span><span class="t" style="left:597px;width:300px;text-align:right;top:303px;transform:scaleX(0.93);transform-origin:100% 0;">1 845</span><div style="left:37px;top:322px;width:980px;height:20px;background:#dcdfd9"></div><div style="left:258px;top:322px;width:1px;height:20px;background:#e8e6ec"></div><div style="left:322px;top:322px;width:1px;height:20px;background:#e8e6ec"></div><div style="left:374px;top:322px;width:1px;height:20px;background:#e8e6ec"></div><div style="left:664px;top:322px;width:1px;height:20px;background:#e8e6ec"></div><div style="left:841px;top:322px;width:1px;height:20px;background:#e8e6ec"></div><div style="left:897px;top:322px;width:1px;height:20px;background:#e8e6ec"></div><div style="left:7px;top:322px;width:30px;height:20px;background:#aea8d9;box-shadow:inset -1px -1px 0 #0e0b30,inset 1px 1px 0 #dcd8f8,inset -2px -2px 0 #5c5498"></div><span class="t" style="left:11px;top:326px;transform:scaleX(0.92);">10</span><span class="t" style="left:40px;top:323px;transform:scaleX(0.915);">070612-BÁCS/1</span><span class="t" style="left:378px;top:323px;transform:scaleX(0.893);">alsó-korlát-kg - felső-korlát-kg</span><span class="t" style="left:597px;width:300px;text-align:right;top:323px;transform:scaleX(0.93);transform-origin:100% 0;">1 845</span><span class="t" style="left:901px;top:323px;transform:scaleX(0.9);">Nem határozható meg</span><div style="left:37px;top:342px;width:980px;height:20px;background:#ffffff"></div><div style="left:258px;top:342px;width:1px;height:20px;background:#e8e6ec"></div><div style="left:322px;top:342px;width:1px;height:20px;background:#e8e6ec"></div><div style="left:374px;top:342px;width:1px;height:20px;background:#e8e6ec"></div><div style="left:664px;top:342px;width:1px;height:20px;background:#e8e6ec"></div><div style="left:841px;top:342px;width:1px;height:20px;background:#e8e6ec"></div><div style="left:897px;top:342px;width:1px;height:20px;background:#e8e6ec"></div><div style="left:7px;top:342px;width:30px;height:20px;background:#aea8d9;box-shadow:inset -1px -1px 0 #0e0b30,inset 1px 1px 0 #dcd8f8,inset -2px -2px 0 #5c5498"></div><span class="t" style="left:11px;top:346px;transform:scaleX(0.92);">11</span><span class="t" style="left:40px;top:343px;transform:scaleX(0.915);">070612-1009_1009_CSABA KÁZMÉR/1</span><span class="t" style="left:262px;top:343px;transform:scaleX(0.9);">2007-06-12</span><span class="t" style="left:378px;top:343px;transform:scaleX(0.893);">sofőr rendszám</span><div style="left:37px;top:362px;width:980px;height:20px;background:#f2f2f2"></div><div style="left:258px;top:362px;width:1px;height:20px;background:#e8e6ec"></div><div style="left:322px;top:362px;width:1px;height:20px;background:#e8e6ec"></div><div style="left:374px;top:362px;width:1px;height:20px;background:#e8e6ec"></div><div style="left:664px;top:362px;width:1px;height:20px;background:#e8e6ec"></div><div style="left:841px;top:362px;width:1px;height:20px;background:#e8e6ec"></div><div style="left:897px;top:362px;width:1px;height:20px;background:#e8e6ec"></div><div style="left:7px;top:362px;width:30px;height:20px;background:#aea8d9;box-shadow:inset -1px -1px 0 #0e0b30,inset 1px 1px 0 #dcd8f8,inset -2px -2px 0 #5c5498"></div><span class="t" style="left:11px;top:366px;transform:scaleX(0.92);">12</span><span class="t" style="left:40px;top:363px;transform:scaleX(0.915);">070612-1009_1009_CSABA KÁZMÉR/1</span><span class="t" style="left:378px;top:363px;transform:scaleX(0.893);">1002 Nagy Nándor, 6070 Izsák, Sólyom u. 2.</span><span class="t" style="left:597px;width:300px;text-align:right;top:363px;transform:scaleX(0.93);transform-origin:100% 0;">600</span><div style="left:37px;top:382px;width:980px;height:20px;background:#ffffff"></div><div style="left:258px;top:382px;width:1px;height:20px;background:#e8e6ec"></div><div style="left:322px;top:382px;width:1px;height:20px;background:#e8e6ec"></div><div style="left:374px;top:382px;width:1px;height:20px;background:#e8e6ec"></div><div style="left:664px;top:382px;width:1px;height:20px;background:#e8e6ec"></div><div style="left:841px;top:382px;width:1px;height:20px;background:#e8e6ec"></div><div style="left:897px;top:382px;width:1px;height:20px;background:#e8e6ec"></div><div style="left:7px;top:382px;width:30px;height:20px;background:#aea8d9;box-shadow:inset -1px -1px 0 #0e0b30,inset 1px 1px 0 #dcd8f8,inset -2px -2px 0 #5c5498"></div><span class="t" style="left:11px;top:386px;transform:scaleX(0.92);">13</span><span class="t" style="left:40px;top:383px;transform:scaleX(0.915);">070612-1009_1009_CSABA KÁZMÉR/1</span><span class="t" style="left:378px;top:383px;transform:scaleX(0.893);">1009 Csaba Kázmér, 7000 Sárbogárd, Záror út 8.</span><span class="t" style="left:597px;width:300px;text-align:right;top:383px;transform:scaleX(0.93);transform-origin:100% 0;">750</span><div style="left:37px;top:402px;width:980px;height:20px;background:#f2f2f2"></div><div style="left:258px;top:402px;width:1px;height:20px;background:#e8e6ec"></div><div style="left:322px;top:402px;width:1px;height:20px;background:#e8e6ec"></div><div style="left:374px;top:402px;width:1px;height:20px;background:#e8e6ec"></div><div style="left:664px;top:402px;width:1px;height:20px;background:#e8e6ec"></div><div style="left:841px;top:402px;width:1px;height:20px;background:#e8e6ec"></div><div style="left:897px;top:402px;width:1px;height:20px;background:#e8e6ec"></div><div style="left:7px;top:402px;width:30px;height:20px;background:#aea8d9;box-shadow:inset -1px -1px 0 #0e0b30,inset 1px 1px 0 #dcd8f8,inset -2px -2px 0 #5c5498"></div><span class="t" style="left:11px;top:406px;transform:scaleX(0.92);">14</span><span class="t" style="left:40px;top:403px;transform:scaleX(0.915);">070612-1009_1009_CSABA KÁZMÉR/1</span><span class="t" style="left:378px;top:403px;transform:scaleX(0.893);">alsó-korlát-kg - felső-korlát-kg</span><span class="t" style="left:597px;width:300px;text-align:right;top:403px;transform:scaleX(0.93);transform-origin:100% 0;">1 350</span><span class="t" style="left:901px;top:403px;transform:scaleX(0.9);">Nem határozható meg</span><div style="left:37px;top:422px;width:980px;height:20px;background:#dcd2de"></div><div style="left:258px;top:422px;width:1px;height:20px;background:#e8e6ec"></div><div style="left:322px;top:422px;width:1px;height:20px;background:#e8e6ec"></div><div style="left:374px;top:422px;width:1px;height:20px;background:#e8e6ec"></div><div style="left:664px;top:422px;width:1px;height:20px;background:#e8e6ec"></div><div style="left:841px;top:422px;width:1px;height:20px;background:#e8e6ec"></div><div style="left:897px;top:422px;width:1px;height:20px;background:#e8e6ec"></div><div style="left:7px;top:422px;width:30px;height:20px;background:#aea8d9;box-shadow:inset -1px -1px 0 #0e0b30,inset 1px 1px 0 #dcd8f8,inset -2px -2px 0 #5c5498"></div><span class="t" style="left:11px;top:426px;transform:scaleX(0.92);">15</span><span class="t" style="left:40px;top:423px;transform:scaleX(0.915);">070612-1010_1010_SZABÓ GÁBOR/1</span><span class="t" style="left:262px;top:423px;transform:scaleX(0.9);">2007-06-12</span><span class="t" style="left:378px;top:423px;transform:scaleX(0.893);">sofőr rendszám</span><div style="left:37px;top:442px;width:980px;height:20px;background:#dcdfd9"></div><div style="left:258px;top:442px;width:1px;height:20px;background:#e8e6ec"></div><div style="left:322px;top:442px;width:1px;height:20px;background:#e8e6ec"></div><div style="left:374px;top:442px;width:1px;height:20px;background:#e8e6ec"></div><div style="left:664px;top:442px;width:1px;height:20px;background:#e8e6ec"></div><div style="left:841px;top:442px;width:1px;height:20px;background:#e8e6ec"></div><div style="left:897px;top:442px;width:1px;height:20px;background:#e8e6ec"></div><div style="left:7px;top:442px;width:30px;height:20px;background:#aea8d9;box-shadow:inset -1px -1px 0 #0e0b30,inset 1px 1px 0 #dcd8f8,inset -2px -2px 0 #5c5498"></div><span class="t" style="left:11px;top:446px;transform:scaleX(0.92);">16</span><span class="t" style="left:40px;top:443px;transform:scaleX(0.915);">070612-1010_1010_SZABÓ GÁBOR/1</span><span class="t" style="left:378px;top:443px;transform:scaleX(0.893);">1010 Szabó Gábor, 4400 Nyíregyháza, Nagy u. 7.</span><span class="t" style="left:597px;width:300px;text-align:right;top:443px;transform:scaleX(0.93);transform-origin:100% 0;">300</span><div style="left:37px;top:462px;width:980px;height:20px;background:#dcd2de"></div><div style="left:258px;top:462px;width:1px;height:20px;background:#e8e6ec"></div><div style="left:322px;top:462px;width:1px;height:20px;background:#e8e6ec"></div><div style="left:374px;top:462px;width:1px;height:20px;background:#e8e6ec"></div><div style="left:664px;top:462px;width:1px;height:20px;background:#e8e6ec"></div><div style="left:841px;top:462px;width:1px;height:20px;background:#e8e6ec"></div><div style="left:897px;top:462px;width:1px;height:20px;background:#e8e6ec"></div><div style="left:7px;top:462px;width:30px;height:20px;background:#aea8d9;box-shadow:inset -1px -1px 0 #0e0b30,inset 1px 1px 0 #dcd8f8,inset -2px -2px 0 #5c5498"></div><span class="t" style="left:11px;top:466px;transform:scaleX(0.92);">17</span><span class="t" style="left:40px;top:463px;transform:scaleX(0.915);">070612-1010_1010_SZABÓ GÁBOR/1</span><span class="t" style="left:378px;top:463px;transform:scaleX(0.893);">alsó-korlát-kg - felső-korlát-kg</span><span class="t" style="left:597px;width:300px;text-align:right;top:463px;transform:scaleX(0.93);transform-origin:100% 0;">300</span><span class="t" style="left:901px;top:463px;transform:scaleX(0.9);">Nem határozható meg</span><div style="left:37px;top:482px;width:980px;height:20px;background:#f2f2f2"></div><div style="left:258px;top:482px;width:1px;height:20px;background:#e8e6ec"></div><div style="left:322px;top:482px;width:1px;height:20px;background:#e8e6ec"></div><div style="left:374px;top:482px;width:1px;height:20px;background:#e8e6ec"></div><div style="left:664px;top:482px;width:1px;height:20px;background:#e8e6ec"></div><div style="left:841px;top:482px;width:1px;height:20px;background:#e8e6ec"></div><div style="left:897px;top:482px;width:1px;height:20px;background:#e8e6ec"></div><div style="left:7px;top:482px;width:30px;height:20px;background:#aea8d9;box-shadow:inset -1px -1px 0 #0e0b30,inset 1px 1px 0 #dcd8f8,inset -2px -2px 0 #5c5498"></div><span class="t" style="left:11px;top:486px;transform:scaleX(0.92);">18</span><span class="t" style="left:40px;top:483px;transform:scaleX(0.915);">070612-1011_1011_KIRÁLY SÁNDORNÉ/1</span><span class="t" style="left:262px;top:483px;transform:scaleX(0.9);">2007-06-12</span><span class="t" style="left:378px;top:483px;transform:scaleX(0.893);">sofőr rendszám</span><div style="left:37px;top:502px;width:980px;height:20px;background:#ffffff"></div><div style="left:258px;top:502px;width:1px;height:20px;background:#e8e6ec"></div><div style="left:322px;top:502px;width:1px;height:20px;background:#e8e6ec"></div><div style="left:374px;top:502px;width:1px;height:20px;background:#e8e6ec"></div><div style="left:664px;top:502px;width:1px;height:20px;background:#e8e6ec"></div><div style="left:841px;top:502px;width:1px;height:20px;background:#e8e6ec"></div><div style="left:897px;top:502px;width:1px;height:20px;background:#e8e6ec"></div><div style="left:7px;top:502px;width:30px;height:20px;background:#aea8d9;box-shadow:inset -1px -1px 0 #0e0b30,inset 1px 1px 0 #dcd8f8,inset -2px -2px 0 #5c5498"></div><span class="t" style="left:11px;top:506px;transform:scaleX(0.92);">19</span><span class="t" style="left:40px;top:503px;transform:scaleX(0.915);">070612-1011_1011_KIRÁLY SÁNDORNÉ/1</span><span class="t" style="left:378px;top:503px;transform:scaleX(0.893);">1011 Király Sándorné, 3700 Kazincbarcika, Somogyi u. 23.</span><span class="t" style="left:597px;width:300px;text-align:right;top:503px;transform:scaleX(0.93);transform-origin:100% 0;">450</span><div style="left:37px;top:522px;width:980px;height:20px;background:#f2f2f2"></div><div style="left:258px;top:522px;width:1px;height:20px;background:#e8e6ec"></div><div style="left:322px;top:522px;width:1px;height:20px;background:#e8e6ec"></div><div style="left:374px;top:522px;width:1px;height:20px;background:#e8e6ec"></div><div style="left:664px;top:522px;width:1px;height:20px;background:#e8e6ec"></div><div style="left:841px;top:522px;width:1px;height:20px;background:#e8e6ec"></div><div style="left:897px;top:522px;width:1px;height:20px;background:#e8e6ec"></div><div style="left:7px;top:522px;width:30px;height:20px;background:#aea8d9;box-shadow:inset -1px -1px 0 #0e0b30,inset 1px 1px 0 #dcd8f8,inset -2px -2px 0 #5c5498"></div><span class="t" style="left:11px;top:526px;transform:scaleX(0.92);">20</span><span class="t" style="left:40px;top:523px;transform:scaleX(0.915);">070612-1011_1011_KIRÁLY SÁNDORNÉ/1</span><span class="t" style="left:378px;top:523px;transform:scaleX(0.893);">alsó-korlát-kg - felső-korlát-kg</span><span class="t" style="left:597px;width:300px;text-align:right;top:523px;transform:scaleX(0.93);transform-origin:100% 0;">450</span><span class="t" style="left:901px;top:523px;transform:scaleX(0.9);">Nem határozható meg</span><div style="left:7px;top:693px;width:15px;height:15px;background:#aea8d9;box-shadow:inset -1px -1px 0 #0e0b30,inset 1px 1px 0 #dcd8f8,inset -2px -2px 0 #5c5498"><svg style="left:4px;top:3px" width="6" height="9"><path d="M4.5 0.5 L0.5 4.5 L4.5 8.5 Z" fill="#000"/></svg></div><div style="left:22px;top:693px;width:979px;height:15px;background:#aea8d9;box-shadow:inset -1px -1px 0 #0e0b30,inset 1px 1px 0 #dcd8f8,inset -2px -2px 0 #5c5498"></div><div style="left:1001px;top:693px;width:16px;height:15px;background:#aea8d9;box-shadow:inset -1px -1px 0 #0e0b30,inset 1px 1px 0 #dcd8f8,inset -2px -2px 0 #5c5498"><svg style="left:6px;top:3px" width="6" height="9"><path d="M0.5 0.5 L4.5 4.5 L0.5 8.5 Z" fill="#000"/></svg></div><div style="left:438px;top:711px;width:148px;height:24px;background:#aea8d9;box-shadow:inset -1px -1px 0 #0e0b30,inset 1px 1px 0 #dcd8f8,inset -2px -2px 0 #5c5498"></div><span class="t" style="left:362px;width:300px;text-align:center;top:717px;transform:scaleX(0.9);transform-origin:50% 0;">Nyomtat</span><div style="left:4px;top:741px;width:41px;height:16px;box-shadow:inset 1px 1px 0 #5c5498,inset -1px -1px 0 #dcd8f8"></div><span class="t" style="left:6px;top:743px;transform:scaleX(0.86);letter-spacing:0.4px">-v1.72X</span><div style="left:47px;top:741px;width:103px;height:16px;box-shadow:inset 1px 1px 0 #5c5498,inset -1px -1px 0 #dcd8f8"></div><span class="t" style="left:49px;top:743px;transform:scaleX(0.92);">4 / 20</span><div style="left:152px;top:741px;width:19px;height:16px;box-shadow:inset 1px 1px 0 #5c5498,inset -1px -1px 0 #dcd8f8"></div><div style="left:154px;top:743px;width:12px;height:12px;border-radius:50%;background:#fff;box-shadow:inset 1.5px 1.5px 0 #000"></div><div style="left:173px;top:741px;width:845px;height:16px;box-shadow:inset 1px 1px 0 #5c5498,inset -1px -1px 0 #dcd8f8"></div><span class="t" style="left:174px;top:743px;transform:scaleX(0.93);">(*)Elnevezés</span><div style="left:0px;top:759px;width:1024px;height:1px;background:#0e0b30"></div><div style="left:0px;top:763px;width:1024px;height:1px;background:#dcd8f8"></div>
</body></html>
